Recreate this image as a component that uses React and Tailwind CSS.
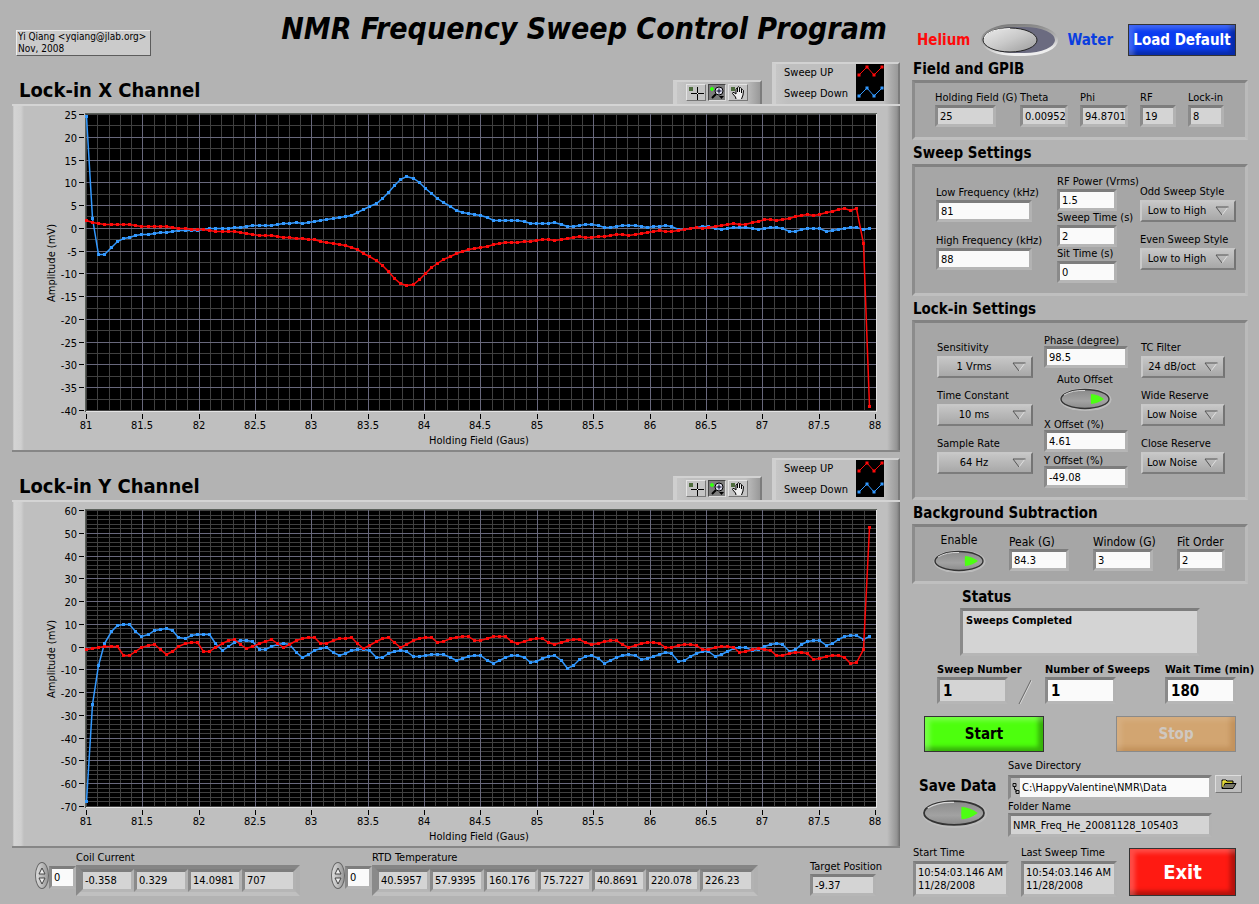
import { useId, useState } from "react";

// samples of every trace, in plot pixels above the zero line
const X_UP = [
  8, 6, 5, 4, 4, 4, 4, 4, 3, 2, 2, 2, 2, 2, 1, 0, 0, -1, -1, -1, -2, -3, -3, -3, -3, -4, -5, -6, -7, -7, -7, -8,
  -9, -9, -10, -10, -11, -11, -13, -14, -15, -16, -17, -19, -21, -25, -28, -32, -37, -43, -50, -55, -57, -56, -51, -45, -39, -35, -31, -28, -25, -23, -21, -20,
  -19, -18, -16, -15, -14, -14, -14, -13, -13, -12, -11, -11, -12, -11, -10, -9, -8, -9, -9, -8, -8, -7, -6, -6, -7, -6, -5, -4, -3, -2, -3, -3,
  -2, -1, 0, 1, 0, 1, 2, 3, 4, 5, 4, 4, 6, 7, 9, 9, 8, 9, 10, 12, 13, 14, 13, 14, 16, 17, 19, 20, 18, 20, -15, -178,
];

const X_DOWN = [
  112, 10, -26, -26, -19, -13, -10, -9, -7, -6, -6, -5, -4, -4, -3, -2, -2, -2, -2, -1, 0, 0, 0, 0, 1, 1, 2, 3, 3, 3, 3, 4,
  5, 5, 6, 5, 6, 7, 8, 9, 10, 11, 12, 13, 16, 19, 22, 25, 30, 36, 43, 49, 52, 50, 46, 40, 35, 30, 26, 22, 18, 16, 15, 14,
  13, 11, 8, 8, 8, 8, 8, 7, 5, 5, 5, 5, 6, 4, 2, 2, 3, 4, 4, 3, 1, 1, 2, 3, 3, 3, 2, 1, 2, 2, 3, 2,
  -1, -1, 0, 1, 2, 2, 0, -1, 0, 1, 1, 1, 0, -1, 0, 1, 1, 0, -3, -3, -1, 0, 0, 0, -3, -2, -1, 0, 1, 1, -1, 0,
];

const Y_UP = [
  -2, -1, 0, 1, 1, 1, -8, -8, -4, 0, 2, 3, -2, -7, -4, 1, 4, 5, 5, -4, -4, 0, 4, 7, 8, 3, -1, 1, 4, 6, 8, 4,
  0, 3, 7, 9, 10, 10, 4, 4, 7, 9, 9, 10, 4, -1, 2, 6, 9, 10, 5, 0, 3, 7, 9, 10, 10, 5, 6, 9, 10, 11, 11, 7,
  7, 9, 11, 11, 11, 6, 4, 6, 8, 9, 9, 5, 3, 5, 7, 8, 8, 5, 3, 4, 6, 7, 7, 3, 0, 2, 4, 5, 5, 4, 0, 0,
  2, 3, 3, 2, -2, -2, 0, 1, 1, 0, -5, -4, -2, -1, -2, -3, -8, -8, -6, -5, -5, -6, -12, -11, -9, -8, -8, -10, -16, -15, -2, 120,
];

const Y_DOWN = [
  -154, -57, -18, 4, 16, 22, 23, 23, 16, 11, 13, 17, 18, 19, 17, 10, 9, 12, 13, 13, 13, 4, -3, 1, 5, 7, 7, 6, -2, -2, 1, 3,
  4, 3, -5, -10, -7, -3, -1, 0, -5, -8, -6, -3, -2, -2, -3, -10, -10, -6, -4, -3, -4, -9, -9, -8, -7, -7, -7, -10, -13, -11, -9, -8,
  -8, -13, -16, -13, -10, -8, -8, -10, -15, -14, -11, -9, -8, -13, -21, -18, -12, -9, -8, -11, -16, -13, -10, -8, -7, -8, -12, -11, -9, -7, -5, -6,
  -14, -13, -9, -6, -4, -4, -9, -7, -4, -1, 0, 0, -3, -2, 1, 3, 4, 3, -4, -2, 3, 6, 7, 7, 2, 4, 8, 11, 12, 12, 8, 11,
];

const RED = "#ff0a0a";
const BLUE = "#3399ff";

const range = (n) => Array.from({ length: n }, (_, i) => i);

const Trace = ({ samples, zero, color }) => {
  const points = samples.map((v, i) => [Math.round(74 + i * 6.163), zero - v]);
  return (
    <g>
      <polyline
        points={points.map(([x, y]) => `${x + 0.5},${y + 0.5}`).join(" ")}
        fill="none"
        stroke={color}
        strokeWidth="1.5"
      />
      {points.map(([x, y]) => (
        <rect key={x} x={x - 1} y={y - 1} width="3" height="3" fill={color} shapeRendering="crispEdges" />
      ))}
    </g>
  );
};

const Plot = ({ top, bottom, step, minorStep, up, down }) => {
  const yOf = (v) => Math.round(8 + ((top - v) * 296) / (top - bottom));
  const xOf = (v) => Math.round(74 + (v - 81) * 112.71);
  const majors = range((top - bottom) / step + 1).map((i) => top - i * step);
  const minors = range((top - bottom) / minorStep + 1).map((i) => top - i * minorStep);
  const zero = yOf(0);

  return (
    <svg viewBox="0 0 888 344" className="block w-full" fontSize="11">
      <rect x="73" y="7" width="792" height="299" fill="#e4e4e4" />
      <path d="M73 306V7H865V8H74V306Z" fill="#5a605a" />
      <rect x="74" y="8" width="790" height="297" fill="#000" />
      <g shapeRendering="crispEdges">
        {range(70).map((i) => (
          <rect key={i} x={xOf(81 + i / 10)} y="8" width="1" height="297" fill="#404040" />
        ))}
        {minors.map((v) => (
          <rect key={v} x="74" y={yOf(v)} width="790" height="1" fill="#404040" />
        ))}
        {range(15).map((i) => (
          <g key={i}>
            {i > 0 && i < 14 && <rect x={xOf(81 + i / 2)} y="8" width="1" height="297" fill="#68687c" />}
            <rect x={xOf(81 + i / 2)} y="308" width="1" height="5" fill="#000" />
          </g>
        ))}
        {majors.map((v) => (
          <g key={v}>
            {v < top && v > bottom && <rect x="74" y={yOf(v)} width="790" height="1" fill="#68687c" />}
            <rect x="67" y={yOf(v)} width="5" height="1" fill="#000" />
          </g>
        ))}
      </g>
      <Trace samples={down} zero={zero} color={BLUE} />
      <Trace samples={up} zero={zero} color={RED} />
      {range(15).map((i) => (
        <text key={i} x={xOf(81 + i / 2)} y="323" textAnchor="middle">{81 + i / 2}</text>
      ))}
      {majors.map((v) => (
        <text key={v} x="65" y={yOf(v) + 5} textAnchor="end">{v}</text>
      ))}
      <text x="467" y="338" textAnchor="middle">Holding Field (Gaus)</text>
      <text x="43" y="157" textAnchor="middle" transform="rotate(-90 43 157)">Amplitude (mV)</text>
    </svg>
  );
};

const raised =
  "border-t-2 border-l-4 border-r-2 border-t-[#d2d2d2] border-l-[#cfcfcf] border-r-[#7c7c7c] bg-[linear-gradient(to_right,#c6c6c6,#bfbfbf_12px,#bfbfbf_calc(100%-14px),#999)]";

const toolButton = "h-[17px] border border-t-[#e4e4e4] border-l-[#e4e4e4] border-r-[#777] border-b-[#777] flex items-center justify-center";

const Palette = () => (
  <div className={`w-[89px] h-[24px] flex items-start gap-[2px] pt-[2px] pl-[9px] ${raised}`}>
    <button aria-label="Cursor" className={`w-[20px] bg-[#c4c4c4] ${toolButton}`}>
      <svg width="18" height="15" shapeRendering="crispEdges">
        <rect x="2" y="2" width="4" height="4" fill="#4d6b3c" />
        <path d="M4 8.5H9M12 8.5H17M10.5 2V7M10.5 10V15M8 8.5H13M10.5 6V11" stroke="#000" />
        <rect x="10" y="8" width="1" height="1" fill="#fff" />
      </svg>
    </button>
    <button aria-label="Zoom" className="w-[18px] h-[17px] border border-t-[#444] border-l-[#444] border-r-[#ddd] border-b-[#ddd] bg-[#7d7d7d] flex items-center justify-center">
      <svg width="16" height="15">
        <path d="M1 4H5M3 2V6" stroke="#33ff11" strokeWidth="2" />
        <path d="M7 9L3 13" stroke="#000" strokeWidth="2" />
        <circle cx="10" cy="6" r="4" fill="#dde" stroke="#000" />
        <path d="M7.5 6H12.5M10 3.5V8.5" stroke="#002" />
        <path d="M10 11H15L12.5 14Z" fill="#000" />
      </svg>
    </button>
    <button aria-label="Pan" className={`w-[20px] bg-[#c4c4c4] ${toolButton}`}>
      <svg width="18" height="15">
        <rect x="2" y="2" width="4" height="4" fill="#4d6b3c" />
        <path
          d="M7 14L6.5 12L3.5 8.5Q3.5 7 5 7.5L7 9V4Q7.8 2.5 8.5 4V7V2.5Q9.5 1 10.5 2.5V7V3Q11.5 2 12.5 3.5V8V5Q13.7 4 14.5 5.5L14 10L12.5 14"
          fill="#eee"
          stroke="#000"
        />
      </svg>
    </button>
  </div>
);

const Legend = () => (
  <div className={`w-[128px] h-[42px] flex justify-between pl-[8px] pr-[14px] ${raised}`}>
    <div className="leading-[21px] -mt-0.5">
      <div>Sweep UP</div>
      <div>Sweep Down</div>
    </div>
    <svg width="28" height="37" className="bg-black">
      {[[RED, 0], [BLUE, 21]].map(([color, y]) => (
        <g key={color} fill={color} stroke={color}>
          <polyline points={`3,${y + 11} 11,${y + 3} 18,${y + 11} 26,${y + 3}`} fill="none" />
          {[[3, 11], [11, 3], [18, 11], [26, 3]].map(([px, py]) => (
            <rect key={px} x={px - 1} y={y + py - 1} width="2" height="2" />
          ))}
        </g>
      ))}
    </svg>
  </div>
);

const Channel = ({ title, ...plot }) => (
  <section>
    <div className="flex items-end h-[42px]">
      <h2 className="flex-1 pl-[7px] text-[20px] leading-[28px] font-bold">{title}</h2>
      <Palette />
      <div className="w-[10px]" />
      <Legend />
    </div>
    <div className="border-t-2 border-b-2 border-t-[#d4d4d4] border-b-[#868686] bg-[linear-gradient(to_right,#aaa,#d4d4d4_2px,#cfcfcf_9px,#bfbfbf_12px,#bfbfbf_calc(100%-13px),#939393_calc(100%-3px),#6a6a6a)]">
      <Plot {...plot} />
    </div>
  </section>
);

const well = "border-[3px] border-t-[#7d7d7d] border-l-[#8a8a8a] border-r-[#b2b2b2] border-b-[#b6b6b6] outline-none";

const Field = ({ label, value, width, readOnly, labelClass = "leading-[14px]", boxClass = "h-[22px] pl-[2px]" }) => {
  const id = useId();
  return (
    <div className={width}>
      <label htmlFor={id} className={`block whitespace-nowrap ${labelClass}`}>{label}</label>
      <input
        id={id}
        defaultValue={value}
        readOnly={readOnly}
        className={`block w-full ${well} ${boxClass} ${readOnly ? "bg-[#d4d4d4]" : "bg-[#fafafa]"}`}
      />
    </div>
  );
};

const Ring = ({ label, value, width }) => {
  const id = useId();
  return (
    <div className={width}>
      <label htmlFor={id} className="block whitespace-nowrap leading-[15px]">{label}</label>
      <div className="relative mt-px">
        <select
          id={id}
          defaultValue={value}
          className="block w-full h-[22px] appearance-none pr-[22px] [text-align-last:center] border-2 border-t-[#c8c8c8] border-l-[#cacaca] border-r-[#747474] border-b-[#7c7c7c] bg-linear-to-b from-[#c6c6c6] to-[#a8a8a8] outline-none"
        >
          <option>{value}</option>
        </select>
        <svg width="14" height="10" className="absolute right-[7px] top-[6px] pointer-events-none">
          <path d="M13 1L7 9" stroke="#e0e0e0" />
          <path d="M13.5 1H1L7 9" fill="none" stroke="#555" />
        </svg>
      </div>
    </div>
  );
};

const OvalButton = ({ label, className }) => {
  const [on, setOn] = useState(true);
  const id = useId();
  return (
    <button aria-label={label} aria-pressed={on} onClick={() => setOn(!on)} className={`block ${className}`}>
      <svg viewBox="0 0 54 24" className="block w-full h-full">
        <defs>
          <linearGradient id={id} x1="0" y1="0" x2="0" y2="1">
            <stop offset="0" stopColor="#8a8a8a" />
            <stop offset="0.6" stopColor="#a2a2a2" />
            <stop offset="1" stopColor="#8a8a8a" />
          </linearGradient>
        </defs>
        <ellipse cx="27.5" cy="12.5" rx="26" ry="11.5" fill="#bcbcbc" />
        <ellipse cx="27" cy="12" rx="24" ry="9.5" fill={`url(#${id})`} stroke="#333" strokeWidth="1.4" />
        <path d="M6 8Q14 3 27 3.5" stroke="#d8d8d8" fill="none" />
        <path d="M33 7Q32.5 12 33 17Q40 16.5 46 12Q40 7.5 33 7Z" fill={on ? "#4dff12" : "#4a6b3c"} />
      </svg>
    </button>
  );
};

const GasSwitch = () => {
  const [water, setWater] = useState(false);
  return (
    <button role="switch" aria-checked={water} aria-label="Water" onClick={() => setWater(!water)} className="ml-[11px] mr-[8px]">
      <svg width="78" height="32" className="block">
        <defs>
          <linearGradient id="knob" x1="0" y1="0" x2="1" y2="1">
            <stop offset="0" stopColor="#ececec" />
            <stop offset="0.5" stopColor="#c9c9c9" />
            <stop offset="1" stopColor="#9a9a9a" />
          </linearGradient>
          <linearGradient id="rim" x1="0" y1="0" x2="0.3" y2="1">
            <stop offset="0" stopColor="#777" />
            <stop offset="0.6" stopColor="#b0b0b0" />
            <stop offset="1" stopColor="#eee" />
          </linearGradient>
        </defs>
        <rect x="1.5" y="1.5" width="74" height="29" rx="32" ry="14.5" fill="#6b6b80" stroke="url(#rim)" strokeWidth="3" />
        <ellipse cx={water ? 48 : 29} cy="16" rx="27" ry="12" fill="url(#knob)" stroke="#222" />
        <path d={water ? "M22 14Q25 5 48 4.5" : "M3 14Q6 5 29 4.5"} stroke="#f5f5f5" fill="none" />
      </svg>
    </button>
  );
};

const gloss = "border font-bold shadow-[inset_5px_4px_4px_rgba(255,255,255,0.22),inset_-5px_-4px_4px_rgba(0,0,0,0.3)]";

const Heading = ({ children, className = "pl-px" }) => (
  <h2 className={`h-6 text-[15px] leading-[26px] font-bold ${className}`}>{children}</h2>
);

const Panel = ({ className, children }) => (
  <div className={`w-[336px] flex border-[3px] border-t-[#828282] border-l-[#8c8c8c] border-r-[#bababa] border-b-[#bfbfbf] bg-[#a6a6a6] ${className}`}>
    {children}
  </div>
);

const ArrayDisplay = ({ label, values, className }) => (
  <div className={`flex pt-[14px] ${className}`}>
    <div className="w-[14px] h-[27px] rounded-[50%] border border-[#666] bg-linear-to-r from-[#ddd] to-[#999] flex flex-col items-center justify-center gap-[2px]">
      <button aria-label={`${label} next`}>
        <svg width="8" height="8" className="block"><path d="M4 1L7 7H1Z" fill="#eee" stroke="#444" /></svg>
      </button>
      <button aria-label={`${label} previous`}>
        <svg width="8" height="8" className="block"><path d="M4 7L7 1H1Z" fill="#eee" stroke="#444" /></svg>
      </button>
    </div>
    <input
      aria-label={`${label} index`}
      defaultValue="0"
      className={`mt-[4px] w-[27px] h-[23px] pl-[2px] bg-[#fafafa] ${well}`}
    />
    <div className="-mt-[12px]">
      <div className="leading-[15px]">{label}</div>
      <div className="flex border-4 border-t-[#858585] border-l-[#8a8a8a] border-r-[#b0b0b0] border-b-[#c0c0c0]">
        {values.map((v) => (
          <input key={v} readOnly aria-label={`${label} ${v}`} value={v} className={`w-[54px] h-[23px] pl-[2px] bg-[#d4d4d4] ${well}`} />
        ))}
      </div>
    </div>
  </div>
);

const TimeStamp = ({ label }) => (
  <div className="w-[96px] mr-[12px]">
    <div className="leading-[14px]">{label}</div>
    <output aria-label={label} className={`block w-full h-[36px] mt-px pl-[2px] pt-[2px] leading-[13px] whitespace-nowrap overflow-hidden bg-[#d4d4d4] ${well}`}>
      10:54:03.146 AM
      <br />
      11/28/2008
    </output>
  </div>
);

const tight = "leading-[10px]";
const bigLabel = "text-[12px] leading-[14px]";
const boldLabel = "leading-[15px] font-bold";
const boldBox = "h-[27px] pl-[3px] text-[15px] font-bold";

const App = () => {
  return (
    <div className="min-h-screen bg-[#b3b3b3] flex gap-[12px] pl-[12px] text-[11px] text-black font-['DejaVu_Sans_Condensed','DejaVu_Sans',sans-serif]">
      <main className="flex-1 min-w-0">
        <header className="h-[62px] flex justify-between pl-[4px] pr-[13px]">
          <div className="self-start mt-[30px] w-[135px] pl-[1px] text-[10px] leading-[12px] whitespace-nowrap bg-[#cbcbcb] border border-t-[#ececec] border-l-[#ececec] border-r-[#5c5c5c] border-b-[#5c5c5c]">
            Yi Qiang &lt;yqiang@jlab.org&gt;
            <br />
            Nov, 2008
          </div>
          <h1 className="text-[30px] leading-[58px] font-bold italic whitespace-nowrap">NMR Frequency Sweep Control Program</h1>
        </header>

        <div className="flex flex-col gap-[6px]">
          <Channel title="Lock-in X Channel" top={25} bottom={-40} step={5} minorStep={2.5} up={X_UP} down={X_DOWN} />
          <Channel title="Lock-in Y Channel" top={60} bottom={-70} step={10} minorStep={2} up={Y_UP} down={Y_DOWN} />
        </div>

        <footer className="flex items-start">
          <ArrayDisplay label="Coil Current" values={["-0.358", "0.329", "14.0981", "707"]} className="ml-[23px]" />
          <ArrayDisplay
            label="RTD Temperature"
            values={["40.5957", "57.9395", "160.176", "75.7227", "40.8691", "220.078", "226.23"]}
            className="ml-[31px]"
          />
          <div className="flex-1" />
          <div className="mt-[12px] mr-[24px]">
            <Field label="Target Position" value="-9.37" width="w-[66px]" readOnly />
          </div>
        </footer>
      </main>

      <aside className="w-[347px] shrink-0">
        <div className="mt-[24px] h-[32px] pl-[5px] flex items-center text-[15px] font-bold">
          <span className="text-[#ff0a0a]">Helium</span>
          <GasSwitch />
          <span className="text-[#0a3ee0]">Water</span>
          <button className={`ml-auto mr-[23px] w-[108px] h-[32px] whitespace-nowrap border-[#333] bg-[#0a3cf0] text-white ${gloss}`}>Load Default</button>
        </div>

        <Heading>Field and GPIB</Heading>
        <Panel className="h-[60px] pl-[20px] pt-[8px]">
          <Field label="Holding Field (G)" value="25" width="w-[61px] mr-[24px]" readOnly />
          <Field label="Theta" value="0.00952" width="w-[48px] mr-[12px]" readOnly />
          <Field label="Phi" value="94.8701" width="w-[48px] mr-[12px]" readOnly />
          <Field label="RF" value="19" width="w-[36px] mr-[12px]" readOnly />
          <Field label="Lock-in" value="8" width="w-[36px]" readOnly />
        </Panel>

        <Heading>Sweep Settings</Heading>
        <Panel className="h-[132px] pl-[21px]">
          <div className="w-[121px] pt-[19px] flex flex-col gap-[12px]">
            <Field label="Low Frequency (kHz)" value="81" width="w-[96px]" />
            <Field label="High Frequency (kHz)" value="88" width="w-[96px]" />
          </div>
          <div className="w-[83px] pt-[8px]">
            <Field label="RF Power (Vrms)" value="1.5" width="w-[60px]" />
            <Field label="Sweep Time (s)" value="2" width="w-[60px]" />
            <Field label="Sit Time (s)" value="0" width="w-[60px]" />
          </div>
          <div className="pt-[17px] flex flex-col gap-[10px]">
            <Ring label="Odd Sweep Style" value="Low to High" width="w-[96px]" />
            <Ring label="Even Sweep Style" value="Low to High" width="w-[96px]" />
          </div>
        </Panel>

        <Heading>Lock-in Settings</Heading>
        <Panel className="h-[180px] pl-[22px]">
          <div className="w-[107px] pt-[17px] flex flex-col gap-[10px]">
            <Ring label="Sensitivity" value="1 Vrms" width="w-[96px]" />
            <Ring label="Time Constant" value="10 ms" width="w-[96px]" />
            <Ring label="Sample Rate" value="64 Hz" width="w-[96px]" />
          </div>
          <div className="w-[97px] pt-[13px]">
            <Field label="Phase (degree)" value="98.5" width="w-[84px]" labelClass={tight} />
            <div className="w-[82px] mt-[5px] mb-[9px] flex flex-col items-center">
              <span className="leading-[14px]">Auto Offset</span>
              <OvalButton label="Auto Offset" className="w-[54px] h-[24px]" />
            </div>
            <Field label="X Offset (%)" value="4.61" width="w-[84px]" labelClass={tight} />
            <div className="h-[4px]" />
            <Field label="Y Offset (%)" value="-49.08" width="w-[84px]" labelClass={tight} />
          </div>
          <div className="pt-[17px] flex flex-col gap-[10px]">
            <Ring label="TC Filter" value="24 dB/oct" width="w-[84px]" />
            <Ring label="Wide Reserve" value="Low Noise" width="w-[84px]" />
            <Ring label="Close Reserve" value="Low Noise" width="w-[84px]" />
          </div>
        </Panel>

        <Heading>Background Subtraction</Heading>
        <Panel className="h-[60px] pl-[17px] pt-[6px]">
          <div className="w-[77px] text-[12px]">
            <div className="w-[54px] text-center leading-[14px]">Enable</div>
            <OvalButton label="Enable" className="w-[54px] h-[24px] mt-[2px]" />
          </div>
          <div className="flex pt-[2px]">
            <Field label="Peak (G)" value="84.3" width="w-[60px] mr-[24px]" labelClass={bigLabel} />
            <Field label="Window (G)" value="3" width="w-[60px] mr-[24px]" labelClass={bigLabel} />
            <Field label="Fit Order" value="2" width="w-[48px]" labelClass={bigLabel} />
          </div>
        </Panel>

        <Heading className="pl-[50px]">Status</Heading>
        <output aria-label="Status" className={`block ml-[48px] w-[240px] h-[48px] pl-[3px] pt-[3px] font-bold leading-[14px] bg-[#d4d4d4] ${well}`}>
          Sweeps Completed
        </output>

        <div className="flex items-start pl-[25px] pt-[6px]">
          <Field label="Sweep Number" value="1" width="w-[71px]" readOnly labelClass={boldLabel} boxClass={boldBox} />
          <svg width="14" height="25" className="ml-[10px] mr-[13px] mt-[17px]">
            <path d="M14 1L2 25" stroke="#e0e0e0" />
            <path d="M13 1L1 25" stroke="#666" />
          </svg>
          <Field label="Number of Sweeps" value="1" width="w-[71px] mr-[49px]" labelClass={boldLabel} boxClass={boldBox} />
          <Field label="Wait Time (min)" value="180" width="w-[71px]" labelClass={boldLabel} boxClass={boldBox} />
        </div>

        <div className="flex justify-between mt-[12px] pl-[12px] pr-[23px] text-[15px]">
          <button className={`w-[120px] h-[36px] border-[#333] bg-[#4dff0d] ${gloss}`}>Start</button>
          <button disabled className="w-[120px] h-[36px] font-bold border border-[#8a8a8a] bg-[#d2a571] text-[#cfc8c0] shadow-[inset_5px_4px_4px_rgba(255,255,255,0.1),inset_-5px_-4px_4px_rgba(150,90,30,0.25)]">Stop</button>
        </div>

        <div className="flex pt-[7px]">
          <div className="w-[96px] pt-[15px] pl-[7px]">
            <div className="text-[15px] leading-[24px] font-bold whitespace-nowrap">Save Data</div>
            <OvalButton label="Save Data" className="w-[70px] h-[30px]" />
          </div>
          <div>
            <label htmlFor="save-dir" className="block leading-[14px]">Save Directory</label>
            <div className="flex items-start gap-[3px] mt-[2px]">
              <div className={`w-[204px] h-[25px] flex items-center bg-[#b8b8b8] ${well}`}>
                <svg width="9" height="14" className="shrink-0">
                  <path d="M2 2.5H5V5.5H2ZM5 9.5H8V12.5H5ZM3.5 5.5V8.5H5V11" fill="none" stroke="#111" />
                </svg>
                <input id="save-dir" defaultValue="C:\HappyValentine\NMR\Data" className="w-full h-full pl-[2px] bg-[#fafafa] outline-none" />
              </div>
              <button aria-label="Browse" className="w-[27px] h-[18px] flex items-center justify-center bg-[#bdbdbd] border border-t-[#ddd] border-l-[#ddd] border-r-[#777] border-b-[#777]">
                <svg width="16" height="12">
                  <path d="M1 10V2H5L6 3H12V5" fill="#c9c22e" stroke="#000" />
                  <path d="M1 10.5L4 5.5H15L12 10.5Z" fill="#77776a" stroke="#000" />
                  <path d="M2 9V3H5" stroke="#fff04a" fill="none" />
                </svg>
              </button>
            </div>
            <Field label="Folder Name" value="NMR_Freq_He_20081128_105403" width="w-[204px]" readOnly boxClass="h-[24px] pl-[2px]" labelClass="leading-[13px]" />
          </div>
        </div>

        <div className="flex pt-[9px] pl-px pr-[23px]">
          <TimeStamp label="Start Time" />
          <TimeStamp label="Last Sweep Time" />
          <button className={`flex-1 h-[48px] mt-[2px] text-[20px] text-white border-[#333] bg-[#ff1a12] ${gloss}`}>Exit</button>
        </div>
      </aside>
    </div>
  );
};

export default App;
